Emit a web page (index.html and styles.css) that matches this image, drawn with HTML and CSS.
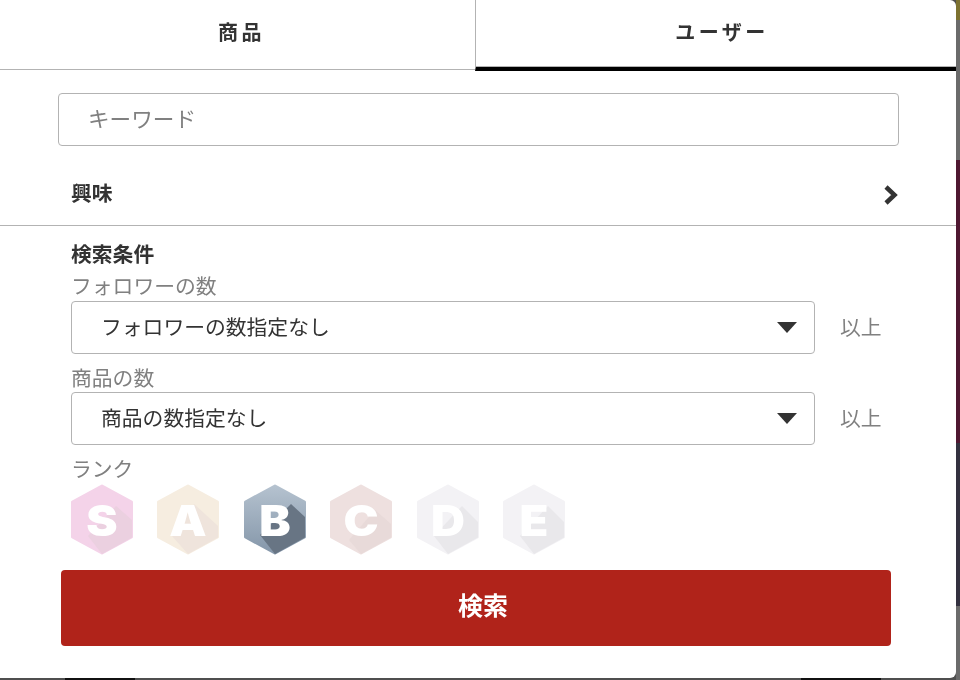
FILE: index.html
```html
<!DOCTYPE html>
<html lang="ja">
<head>
  <meta charset="UTF-8">
  <meta name="viewport" content="width=device-width, initial-scale=1.0">
  <title>検索</title>
  <link rel="stylesheet" href="styles.css">
</head>
<body>
  <div class="backdrop">
    <div class="backdrop-bottom">
      <span class="peek peek-left"></span>
      <span class="peek peek-right"></span>
    </div>
    <div class="backdrop-strip">
      <span class="strip-olive"></span>
      <span class="strip-gray"></span>
      <span class="strip-maroon"></span>
      <span class="strip-dark"></span>
      <span class="strip-end"></span>
    </div>
  </div>
  <div class="modal">
    <div class="tabs">
      <div class="tab">商品</div>
      <div class="tab tab-active">ユーザー</div>
    </div>

    <div class="keyword-row">
      <input class="keyword" type="text" placeholder="キーワード">
    </div>

    <div class="interest-row">
      <span class="interest-label">興味</span>
      <svg class="chevron" width="14" height="20" viewBox="0 0 14 20">
        <path d="M2 2 L10.5 10 L2 18" fill="none" stroke="#333" stroke-width="4.5"/>
      </svg>
    </div>

    <div class="conditions">
      <h2 class="conditions-title">検索条件</h2>

      <label class="field-label">フォロワーの数</label>
      <div class="select-row">
        <div class="select">
          <span class="select-text">フォロワーの数指定なし</span>
          <svg class="caret" width="20" height="11" viewBox="0 0 20 11"><path d="M0 0 H20 L10 11 Z" fill="#333"/></svg>
        </div>
        <span class="select-suffix">以上</span>
      </div>

      <label class="field-label">商品の数</label>
      <div class="select-row">
        <div class="select">
          <span class="select-text">商品の数指定なし</span>
          <svg class="caret" width="20" height="11" viewBox="0 0 20 11"><path d="M0 0 H20 L10 11 Z" fill="#333"/></svg>
        </div>
        <span class="select-suffix">以上</span>
      </div>

      <label class="field-label">ランク</label>
      <div class="ranks">
        <div class="rank rank-s">
          <svg width="64" height="72" viewBox="0 0 64 72">
            <polygon class="hex" points="32,2 61.5,18 61.5,53 32,69 2.5,53 2.5,18"/>
            <polygon class="hex-shade" points="46,22 62,36 62,53.5 32,70 18,52"/>
          </svg>
          <span class="rank-letter">S</span>
        </div>
        <div class="rank rank-a">
          <svg width="64" height="72" viewBox="0 0 64 72">
            <polygon class="hex" points="32,2 61.5,18 61.5,53 32,69 2.5,53 2.5,18"/>
            <polygon class="hex-shade" points="38,20 62,42 62,53.5 32,70 16,52"/>
          </svg>
          <span class="rank-letter">A</span>
        </div>
        <div class="rank rank-b">
          <svg width="64" height="72" viewBox="0 0 64 72">
            <defs>
              <linearGradient id="b-face" gradientUnits="userSpaceOnUse" x1="0" y1="0" x2="0" y2="70">
                <stop offset="0" stop-color="#b6c3d0"/>
                <stop offset="1" stop-color="#8496a9"/>
              </linearGradient>
            </defs>
            <polygon class="hex" points="32,2 61.5,18 61.5,53 32,69 2.5,53 2.5,18"/>
            <polygon class="hex-shade" points="48,20 62,33 62,53.5 32,70 17,51"/>
          </svg>
          <span class="rank-letter">B</span>
        </div>
        <div class="rank rank-c">
          <svg width="64" height="72" viewBox="0 0 64 72">
            <polygon class="hex" points="32,2 61.5,18 61.5,53 32,69 2.5,53 2.5,18"/>
            <polygon class="hex-shade" points="46,26 62,40 62,53.5 32,70 20,56"/>
          </svg>
          <span class="rank-letter">C</span>
        </div>
        <div class="rank rank-d">
          <svg width="64" height="72" viewBox="0 0 64 72">
            <polygon class="hex" points="32,2 61.5,18 61.5,53 32,69 2.5,53 2.5,18"/>
            <polygon class="hex-shade" points="46,22 62,38 62,53.5 32,70 18,52"/>
          </svg>
          <span class="rank-letter">D</span>
        </div>
        <div class="rank rank-e">
          <svg width="64" height="72" viewBox="0 0 64 72">
            <polygon class="hex" points="32,2 61.5,18 61.5,53 32,69 2.5,53 2.5,18"/>
            <polygon class="hex-shade" points="46,22 62,38 62,53.5 32,70 18,52"/>
          </svg>
          <span class="rank-letter">E</span>
        </div>
      </div>
    </div>

    <div class="submit-row">
      <button class="submit" type="button">検索</button>
    </div>
  </div>
</body>
</html>
```

FILE: styles.css
```css
* {
  box-sizing: border-box;
}
html, body {
  height: 100%;
}
body {
  margin: 0;
  overflow: hidden;
  background-color: #4f4f4f;
  color: #333;
  font-family: "Open Sans", "Noto Sans CJK JP", sans-serif;
}
.backdrop {
  position: fixed;
  inset: 0;
  display: flex;
  justify-content: flex-end;
  align-items: flex-end;
}
.backdrop-bottom {
  flex: 1;
  display: flex;
  justify-content: space-between;
  height: 2px;
  padding: 0 75px 0 65px;
}
.peek {
  height: 2px;
  background-color: #111;
}
.peek-left {
  width: 70px;
}
.peek-right {
  width: 80px;
}
.backdrop-strip {
  width: 4px;
  height: 100%;
  display: flex;
  flex-direction: column;
}
.strip-olive {
  height: 20px;
  background-color: #7d7230;
}
.strip-gray {
  height: 140px;
  background-color: #6b6b6b;
}
.strip-maroon {
  height: 283px;
  background-color: #4f1731;
}
.strip-dark {
  height: 163px;
  background-color: #33313f;
}
.strip-end {
  flex: 1;
  background-color: #6b6b6b;
}
.modal {
  position: relative;
  width: 956px;
  height: 678px;
  background-color: #fff;
  border-radius: 0 6px 6px 0;
}

/* tabs */
.tabs {
  display: flex;
  height: 71px;
}
.tab {
  width: 475px;
  height: 70px;
  padding-left: 8px;
  border-bottom: 1px solid #b3b3b3;
  text-align: center;
  font-size: 20px;
  font-weight: 700;
  line-height: 66px;
  letter-spacing: 3.5px;
}
.tab-active {
  width: 481px;
  height: 71px;
  padding-left: 12px;
  border-left: 1px solid #b3b3b3;
  border-bottom: 4px solid #000;
  box-shadow: inset 0 -1px 0 #b3b3b3;
}

/* keyword */
.keyword-row {
  padding: 22px 57px 0 58px;
}
.keyword {
  display: block;
  width: 100%;
  height: 53px;
  padding: 0 29px 3px;
  border: 1px solid #b3b3b3;
  border-radius: 4px;
  font-family: inherit;
  font-size: 21.6px;
  color: #333;
  outline: none;
}
.keyword::placeholder {
  color: #808080;
}

/* interest */
.interest-row {
  display: flex;
  align-items: center;
  justify-content: space-between;
  height: 80px;
  padding: 19px 58px 0 71px;
  border-bottom: 1px solid #b3b3b3;
}
.interest-label {
  margin-bottom: 6px;
  font-size: 20.8px;
  font-weight: 700;
}

/* conditions */
.conditions {
  padding: 13px 0 0 71px;
}
.conditions-title {
  margin: 0 0 2px;
  font-size: 20.8px;
  font-weight: 700;
  line-height: 30px;
}
.field-label {
  display: block;
  height: 30px;
  padding-top: 2px;
  font-size: 20.8px;
  line-height: 28px;
  color: #808080;
}
.conditions-title + .field-label {
  padding-top: 0;
  line-height: 30px;
}
.select-row {
  display: flex;
  align-items: center;
  margin-bottom: 8px;
}
.select {
  display: flex;
  align-items: center;
  justify-content: space-between;
  width: 744px;
  height: 53px;
  padding: 0 17px 0 29px;
  border: 1px solid #b3b3b3;
  border-radius: 4px;
  font-size: 20.8px;
}
.select-text {
  margin-bottom: 4px;
}
.select-suffix {
  margin: 0 0 4px 25px;
  font-size: 20.8px;
  color: #808080;
}

/* ranks */
.ranks {
  display: flex;
  gap: 22.4px;
  margin: 1px 0 0 -1px;
}
.rank {
  position: relative;
  width: 64px;
  height: 72px;
  flex: none;
}
.rank svg {
  display: block;
}
.hex {
  stroke-width: 3;
  stroke-linejoin: round;
}
.rank-letter {
  position: absolute;
  inset: 0;
  text-align: center;
  font-family: "Inter", sans-serif;
  font-size: 42px;
  font-weight: 900;
  line-height: 73px;
  color: #fff;
  transform: scaleX(1.12);
}
.rank-s .hex { fill: #f4d3e9; stroke: #f4d3e9; }
.rank-s .hex-shade { fill: #ebd0e0; }
.rank-a .hex { fill: #f6ede0; stroke: #f6ede0; }
.rank-a .hex-shade { fill: #efe4dc; }
.rank-b .hex { fill: url(#b-face); stroke: url(#b-face); }
.rank-b .hex-shade { fill: #687584; }
.rank-c .hex { fill: #eee0df; stroke: #eee0df; }
.rank-c .hex-shade { fill: #e8dad9; }
.rank-d .hex { fill: #f3f2f5; stroke: #f3f2f5; }
.rank-d .hex-shade { fill: #e9e8eb; }
.rank-e .hex { fill: #f3f2f5; stroke: #f3f2f5; }
.rank-e .hex-shade { fill: #e9e8eb; }

/* submit */
.submit-row {
  padding: 14px 65px 0 61px;
}
.submit {
  display: block;
  width: 100%;
  height: 76px;
  padding: 0 0 8px 14px;
  border: none;
  border-radius: 4px;
  background-color: #b0231a;
  color: #fff;
  font-family: inherit;
  font-size: 25px;
  font-weight: 700;
}
```
